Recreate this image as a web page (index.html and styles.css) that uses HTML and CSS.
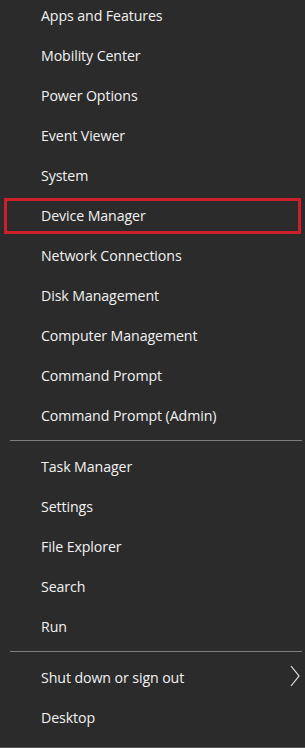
FILE: index.html
```html
<!DOCTYPE html>
<html lang="en">
<head>
  <meta charset="UTF-8">
  <title>Quick Link Menu</title>
  <link rel="stylesheet" href="styles.css">
</head>
<body>

  <div class="menu">
    <ul class="group first">
      <li class="item">Apps and Features</li>
      <li class="item">Mobility Center</li>
      <li class="item">Power Options</li>
      <li class="item">Event Viewer</li>
      <li class="item">System</li>
      <li class="item highlight">Device Manager</li>
      <li class="item">Network Connections</li>
      <li class="item">Disk Management</li>
      <li class="item">Computer Management</li>
      <li class="item">Command Prompt</li>
      <li class="item">Command Prompt (Admin)</li>
    </ul>

    <div class="separator"></div>

    <ul class="group">
      <li class="item">Task Manager</li>
      <li class="item">Settings</li>
      <li class="item">File Explorer</li>
      <li class="item">Search</li>
      <li class="item">Run</li>
    </ul>

    <div class="separator"></div>

    <ul class="group">
      <li class="item submenu">
        <span>Shut down or sign out</span>
        <svg class="chevron" width="10" height="22" viewBox="0 0 10 22">
          <polyline points="1,1 9,11 1,21" fill="none" stroke="#e8e8e8" stroke-width="1.2"/>
        </svg>
      </li>
      <li class="item">Desktop</li>
    </ul>
  </div>

</body>
</html>
```

FILE: styles.css
```css
body {
  margin: 0;
  background-color: #2b2b2b;
  font-family: 'Open Sans', 'Noto Sans', sans-serif;
  color: #f2f2f2;
}

.menu {
  height: 748px;
  box-sizing: border-box;
  border-bottom: 1px solid #5a5a5a;
  overflow: hidden;
}

.group {
  list-style: none;
  margin: 0;
  padding: 0;
}

.item {
  position: relative;
  height: 32px;
  line-height: 32px;
  margin-bottom: 8px;
  padding-left: 41px;
  font-size: 14.2px;
  letter-spacing: -0.1px;
  white-space: nowrap;
}

.item.highlight::after {
  content: "";
  position: absolute;
  top: -2px;
  bottom: -2px;
  left: 4px;
  right: 4px;
  border: 3px solid #cc1f2c;
}

.separator {
  height: 1px;
  background-color: #7e7e7e;
  margin: 0 3px 10px 10px;
}

.submenu {
  display: flex;
  justify-content: space-between;
  align-items: center;
  padding-right: 5px;
}

.chevron {
  margin-top: -5px;
}
```
